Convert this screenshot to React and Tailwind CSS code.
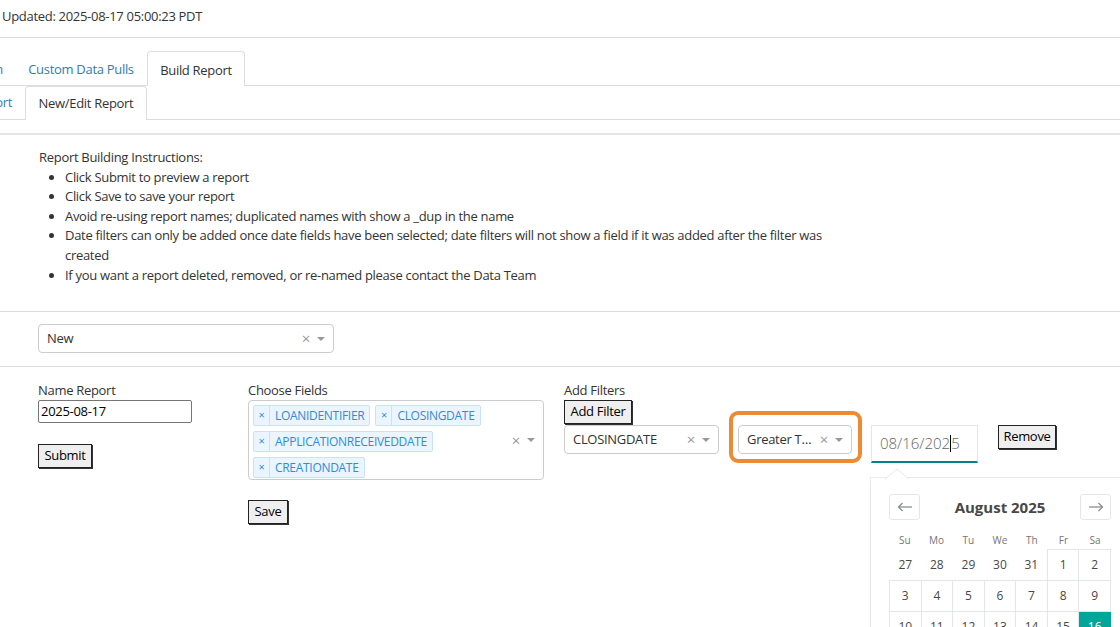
import React from "react";

const Caret = () => (
  <span className="ml-[7px] h-0 w-0 border-x-[4px] border-t-[4px] border-x-transparent border-t-[#999]" />
);

const Select = ({ value, className = "" }) => (
  <div
    className={`flex h-[29px] items-center rounded-[4px] border border-[#ccc] bg-white pl-[8px] pr-[8px] text-[13px] text-[#333] ${className}`}
  >
    <span className="mr-[6px] flex-1 truncate">{value}</span>
    <span className="text-[15px] leading-none text-[#999]">×</span>
    <Caret />
  </div>
);

const Btn = ({ children, className = "" }) => (
  <button
    className={`flex h-[24px] items-center justify-center border border-[#222] bg-[#efefef] text-[13px] text-black shadow-[1px_1px_0_#333] ${className}`}
  >
    {children}
  </button>
);

const Chip = ({ label }) => (
  <div className="flex h-[21px] items-stretch rounded-[2px] border border-[#c9e2fb] bg-[#ebf5ff] text-[12px] text-[#2f8be0]">
    <span className="flex w-[16px] items-center justify-center border-r border-[#c9e2fb] text-[11px]">×</span>
    <span className="flex items-center px-[5px]">{label}</span>
  </div>
);

const Arrow = ({ dir }) => (
  <svg width="16" height="10" viewBox="0 0 16 10" fill="none" stroke="#82888a" strokeWidth="1.2">
    {dir === "left" ? (
      <>
        <path d="M15 5H1.5" />
        <path d="M5.5 1L1.5 5L5.5 9" />
      </>
    ) : (
      <>
        <path d="M1 5h13.5" />
        <path d="M10.5 1l4 4-4 4" />
      </>
    )}
  </svg>
);

const weeks = [
  [27, 28, 29, 30, 31, 1, 2],
  [3, 4, 5, 6, 7, 8, 9],
  [10, 11, 12, 13, 14, 15, 16],
  [17, 18, 19, 20, 21, 22, 23],
  [24, 25, 26, 27, 28, 29, 30],
];

const Calendar = () => (
  <div className="absolute left-0 top-[53px] z-10 w-[258px] bg-white px-[18px] pb-[16px] pt-[16px] tracking-normal shadow-[0_2px_6px_rgba(0,0,0,0.05),0_0_0_1px_rgba(0,0,0,0.07)]">
    <svg className="absolute -top-[9px] left-[14px]" width="24" height="10" viewBox="0 0 24 10">
      <path d="M0 10L12 0L24 10" fill="#fff" stroke="#e5e5e5" strokeWidth="1" />
    </svg>
    <div className="flex h-[26px] items-center justify-between">
      <div className="flex h-[26px] w-[31px] items-center justify-center rounded-[3px] border border-[#e4e7e7]">
        <Arrow dir="left" />
      </div>
      <div className="text-[15px] font-bold text-[#484848]">August 2025</div>
      <div className="flex h-[26px] w-[31px] items-center justify-center rounded-[3px] border border-[#e4e7e7]">
        <Arrow dir="right" />
      </div>
    </div>
    <div className="mt-[13px] grid h-[14px] w-[222px] grid-cols-7 text-center text-[10px] leading-[14px] text-[#757575]">
      {["Su", "Mo", "Tu", "We", "Th", "Fr", "Sa"].map((d) => (
        <span key={d}>{d}</span>
      ))}
    </div>
    <table className="mt-[2px] w-[222px] table-fixed border-collapse text-center text-[12px] text-[#484848]">
      <tbody>
        {weeks.map((week, wi) => (
          <tr key={wi}>
            {week.map((day, di) => {
              const outside = wi === 0 && day > 20;
              const selected = wi === 2 && day === 16;
              return (
                <td
                  key={di}
                  className={`h-[31px] ${
                    outside
                      ? ""
                      : selected
                      ? "border border-[#00a699] bg-[#00a699] text-white"
                      : "border border-[#e4e7e7]"
                  }`}
                >
                  {day}
                </td>
              );
            })}
          </tr>
        ))}
      </tbody>
    </table>
  </div>
);

export default function App() {
  return (
    <div className="relative h-[627px] w-[1120px] overflow-hidden bg-white font-['Open_Sans','Liberation_Sans',sans-serif] text-[13px] tracking-[-0.3px] text-[#333]">
      {/* header */}
      <div className="flex h-[38px] items-start border-b border-[#ddd] pl-[2px] pt-[7px]">
        Updated: 2025-08-17 05:00:23 PDT
      </div>

      {/* tab row 1 */}
      <div className="flex h-[48px] items-end border-b border-[#ddd]">
        <div className="flex h-[34px] w-[15px] items-center justify-end overflow-hidden whitespace-nowrap pr-[12px] pt-[3px] text-[#337ab7]">
          Admin
        </div>
        <div className="flex h-[34px] w-[132px] items-center justify-center pt-[3px] text-[#337ab7]">Custom Data Pulls</div>
        <div className="-mb-px flex h-[35px] w-[98px] items-center justify-center rounded-t-[4px] border border-b-0 border-[#ddd] bg-white pt-[3px]">
          Build Report
        </div>
      </div>

      {/* tab row 2 */}
      <div className="flex h-[34px] items-end border-b border-[#ddd]">
        <div className="flex h-[33px] w-[25px] items-center justify-end overflow-hidden whitespace-nowrap pr-[13px] text-[#337ab7]">
          View Report
        </div>
        <div className="-mb-px flex h-[34px] w-[122px] items-center justify-center rounded-t-[4px] border border-b-0 border-[#ddd] bg-white">
          New/Edit Report
        </div>
      </div>

      {/* instructions */}
      <div className="mt-[13px] border-t-2 border-b border-t-[#e5e5e5] border-b-[#ddd] pb-[26px] pl-[39px] pt-[13px] leading-[19.6px]">
        <div>Report Building Instructions:</div>
        <ul className="list-disc pl-[26px]">
          <li>Click Submit to preview a report</li>
          <li>Click Save to save your report</li>
          <li>Avoid re-using report names; duplicated names with show a _dup in the name</li>
          <li>
            Date filters can only be added once date fields have been selected; date filters will not show a field if it was added after the filter was
            <br />
            created
          </li>
          <li>If you want a report deleted, removed, or re-named please contact the Data Team</li>
        </ul>
      </div>

      {/* report select */}
      <div className="border-b border-[#ddd] pb-[13px] pl-[38px] pt-[12px]">
        <Select value="New" className="w-[296px]" />
      </div>

      {/* form */}
      <div className="flex pl-[38px] pt-[14px]">
        <div className="w-[210px]">
          <div className="h-[19px] leading-[19px]">Name Report</div>
          <div className="flex h-[23px] w-[154px] items-center rounded-[2px] border border-[#767676] px-[2px] text-black">
            2025-08-17
          </div>
          <Btn className="mt-[21px] w-[54px]">Submit</Btn>
        </div>

        <div className="mr-[20px] w-[296px]">
          <div className="h-[19px] leading-[19px]">Choose Fields</div>
          <div className="flex h-[80px] items-center rounded-[4px] border border-[#ccc] pl-[4px] pr-[8px]">
            <div className="flex flex-1 flex-col gap-[5px] self-start pt-[4px]">
              <div className="flex gap-[5px]">
                <Chip label="LOANIDENTIFIER" />
                <Chip label="CLOSINGDATE" />
              </div>
              <div className="flex">
                <Chip label="APPLICATIONRECEIVEDDATE" />
              </div>
              <div className="flex">
                <Chip label="CREATIONDATE" />
              </div>
            </div>
            <span className="text-[15px] leading-none text-[#999]">×</span>
            <Caret />
          </div>
          <Btn className="mt-[20px] w-[40px]">Save</Btn>
        </div>

        <div>
          <div className="h-[19px] leading-[19px]">Add Filters</div>
          <Btn className="h-[23px] w-[68px]">Add Filter</Btn>
          <div className="mt-[1px] flex items-start">
            <Select value="CLOSINGDATE" className="w-[155px]" />
            <div className="relative ml-[19px]">
              <Select value="Greater Than" className="w-[114px]" />
              <div className="absolute -bottom-[9px] -left-[9px] -right-[10px] -top-[14px] rounded-[9px] border-[4px] border-[#ef8a34]" />
            </div>
            <div className="relative ml-[19px]">
              <div className="flex h-[38px] w-[107px] items-center border border-b-2 border-[#e6e6e6] border-b-[#008489] pl-[8px] text-[15px] font-light tracking-normal text-[#666]">
                08/16/202
                <span className="inline-block h-[17px] w-px bg-black" />5
              </div>
              <Calendar />
            </div>
            <Btn className="ml-[20px] w-[58px]">Remove</Btn>
          </div>
        </div>
      </div>
    </div>
  );
}
